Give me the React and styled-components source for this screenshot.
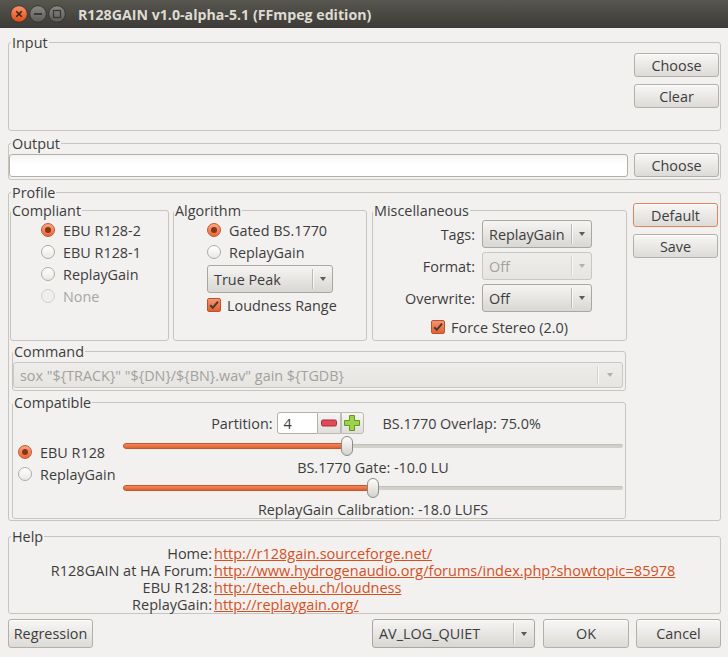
import React from 'react';
import styled, { createGlobalStyle } from 'styled-components';

const GlobalStyle = createGlobalStyle`
  html, body { margin: 0; padding: 0; background: #f2f1f0; }
  body {
    font-family: "Open Sans", "DejaVu Sans", sans-serif;
    font-size: 14.4px;
    color: #3d3d3d;
  }
  * { box-sizing: border-box; }
`;

const Window = styled.div`
  width: 728px;
  height: 657px;
  display: flex;
  flex-direction: column;
  background: #f2f1f0;
  overflow: hidden;
`;

const TitleBar = styled.div`
  height: 28px;
  flex: none;
  display: flex;
  align-items: center;
  padding-left: 10px;
  background: linear-gradient(#57564f, #3c3b37);
  color: #dfdbd2;
  font-weight: bold;
  font-size: 14.2px;
`;

const WinButtons = styled.div`
  display: flex;
  gap: 1px;
  margin-right: 12px;
`;

const Title = styled.span`
  white-space: nowrap;
`;

const Body = styled.div`
  flex: 1;
  display: flex;
  flex-direction: column;
  padding: 6px 7px 0 8px;
`;

const Group = styled.fieldset`
  margin: ${(p) => p.$m || '0'};
  padding: 0;
  min-width: 0;
  border: 1px solid #c8c5c0;
  border-radius: 3px;
  ${(p) => (p.$w ? `width: ${p.$w}px; flex: none;` : '')}
  ${(p) => (p.$h ? `height: ${p.$h}px;` : '')}
`;

const Legend = styled.legend`
  padding: 0 1px;
  margin-left: ${(p) => p.$ml ?? 2}px;
  line-height: 17px;
  font-size: 14.4px;
  color: #3d3d3d;
`;

const Button = styled.div`
  width: ${(p) => p.$w || 85}px;
  height: ${(p) => p.$h || 24}px;
  flex: none;
  display: flex;
  align-items: center;
  justify-content: center;
  border: 1px solid ${(p) => (p.$focus ? '#e3845c' : '#b3b0aa')};
  border-radius: 3px;
  background: linear-gradient(#f8f7f6, #dddbd7);
  box-shadow: inset 0 1px rgba(255, 255, 255, 0.7);
  color: #3d3d3d;
`;

const InputRow = styled.div`
  display: flex;
  height: 79px;
  padding: 2px 1px 0 1px;
  gap: 6px;
`;

const ListArea = styled.div`
  flex: 1;
`;

const ButtonColumn = styled.div`
  display: flex;
  flex-direction: column;
  gap: 7px;
`;

const OutputRow = styled.div`
  display: flex;
  align-items: center;
  gap: 6px;
  padding: 1px 1px 2px 0;
`;

const TextField = styled.div`
  flex: 1;
  height: 23px;
  border: 1px solid #b3b0aa;
  border-radius: 3px;
  background: linear-gradient(#f4f4f3, #ffffff 40%);
`;

const ProfileRow = styled.div`
  display: flex;
  gap: 6px;
  padding: 0 2px 1px 1px;
`;

const LeftColumn = styled.div`
  width: 617px;
  flex: none;
  display: flex;
  flex-direction: column;
  margin-top: 1px;
`;

const RightColumn = styled.div`
  display: flex;
  flex-direction: column;
  gap: 7px;
  padding-top: 2px;
`;

const GroupsRow = styled.div`
  display: flex;
  gap: 4px;
  & > :last-child { margin-left: 1px; }
`;

const Stack = styled.div`
  display: flex;
  flex-direction: column;
  align-items: flex-start;
  padding: ${(p) => p.$pad || '0'};
`;

const RadioRow = styled.div`
  height: 22px;
  display: flex;
  align-items: center;
  gap: 8px;
  white-space: nowrap;
  color: ${(p) => (p.$disabled ? '#a8a6a2' : '#3d3d3d')};
`;

const RadioDot = styled.span`
  position: relative;
  width: 14px;
  height: 14px;
  flex: none;
  border-radius: 50%;
  border: 1px solid
    ${(p) => (p.$checked ? '#c2582c' : p.$disabled ? '#d2d0cc' : '#aeaca6')};
  background: ${(p) =>
    p.$checked
      ? 'linear-gradient(#f7a884, #e8683a)'
      : p.$disabled
      ? '#efeeec'
      : 'linear-gradient(#ffffff, #e9e8e5)'};
  &::after {
    content: '';
    display: ${(p) => (p.$checked ? 'block' : 'none')};
    position: absolute;
    left: 3px;
    top: 3px;
    width: 6px;
    height: 6px;
    border-radius: 50%;
    background: #8a3414;
  }
`;

const CheckRow = styled.div`
  height: 22px;
  display: flex;
  align-items: center;
  gap: 6px;
  white-space: nowrap;
  align-self: ${(p) => p.$align || 'flex-start'};
  margin-top: ${(p) => p.$mt || 0}px;
`;

const CheckBox = styled.span`
  width: 14px;
  height: 14px;
  flex: none;
  display: flex;
  border-radius: 2px;
  border: 1px solid #b9532a;
  background: linear-gradient(#f39570, #e2622f);
`;

const ComboBox = styled.div`
  width: ${(p) => p.$w}px;
  height: ${(p) => p.$h || 28}px;
  flex: none;
  display: flex;
  align-items: stretch;
  border: 1px solid ${(p) => (p.$disabled ? '#c9c7c2' : '#aaa7a1')};
  border-radius: 3px;
  background: ${(p) =>
    p.$disabled ? 'linear-gradient(#eeedeb, #e6e5e2)' : 'linear-gradient(#f6f5f4, #d9d7d3)'};
  color: ${(p) => (p.$disabled ? '#a3a19d' : '#3d3d3d')};
  margin: ${(p) => p.$m || '0'};
`;

const ComboText = styled.div`
  flex: 1;
  display: flex;
  align-items: center;
  padding-left: 6px;
  white-space: nowrap;
  overflow: hidden;
`;

const ComboArrow = styled.div`
  width: ${(p) => p.$aw || 20}px;
  flex: none;
  display: flex;
  align-items: center;
  justify-content: center;
  margin: 3px 0;
  border-left: 1px solid ${(p) => (p.$disabled ? '#d4d2ce' : '#bcb9b4')};
  box-shadow: inset 1px 0 rgba(255, 255, 255, 0.7);
  &::after {
    content: '';
    border-left: 3.5px solid transparent;
    border-right: 3.5px solid transparent;
    border-top: 4px solid ${(p) => (p.$disabled ? '#b3b1ad' : '#5b5a57')};
  }
`;

const MiscBody = styled.div`
  display: flex;
  flex-direction: column;
  padding-top: 1px;
`;

const FormGrid = styled.div`
  display: grid;
  grid-template-columns: 102px 110px;
  column-gap: 7px;
  row-gap: 4px;
  align-items: center;
`;

const FormLabel = styled.div`
  text-align: right;
  white-space: nowrap;
`;

const CompatGrid = styled.div`
  display: grid;
  grid-template-columns: 110px 500px;
  grid-template-rows: 22px 24px 18px 24px 18px;
  padding: 1px 0 0 0;
`;

const SpinRow = styled.div`
  grid-column: 2;
  grid-row: 1;
  display: flex;
  align-items: center;
`;

const SpinHalf = styled.div`
  flex: 1;
  display: flex;
  align-items: center;
  justify-content: ${(p) => (p.$end ? 'flex-end' : 'flex-start')};
  padding: ${(p) => (p.$end ? '0 11px 0 0' : '0 0 0 8px')};
  gap: 4px;
  white-space: nowrap;
`;

const SpinBox = styled.div`
  display: flex;
  height: 22px;
`;

const SpinField = styled.div`
  width: 41px;
  display: flex;
  align-items: center;
  padding-left: 6px;
  border: 1px solid #b3b0aa;
  border-radius: 3px 0 0 3px;
  background: #fff;
`;

const SpinButton = styled.div`
  width: 23px;
  display: flex;
  align-items: center;
  justify-content: center;
  border: 1px solid #bebbb6;
  border-left: ${(p) => (p.$first ? 'none' : '1px solid #bebbb6')};
  border-radius: ${(p) => (p.$last ? '0 3px 3px 0' : '0')};
  background: linear-gradient(#f7f6f5, #e0ded9);
`;

const RadioCol = styled.div`
  grid-column: 1;
  grid-row: 2 / 6;
  padding: 7px 0 0 5px;
`;

const SliderRow = styled.div`
  grid-column: 2;
  grid-row: ${(p) => p.$row};
  display: flex;
  align-items: center;
`;

const CaptionRow = styled.div`
  grid-column: 2;
  grid-row: ${(p) => p.$row};
  display: flex;
  align-items: center;
  justify-content: center;
  white-space: nowrap;
`;

const Track = styled.div`
  position: relative;
  width: 100%;
  height: 4px;
  border-radius: 2px;
  background: #d3d0cb;
  box-shadow: inset 0 1px rgba(0, 0, 0, 0.08);
`;

const TrackFill = styled.div`
  height: 6px;
  margin-top: -1px;
  border-radius: 3px;
  border: 1px solid #c4562a;
  background: linear-gradient(#f08a5f, #e0602e);
`;

const Handle = styled.div`
  position: absolute;
  top: -8px;
  width: 12px;
  height: 20px;
  margin-left: -6px;
  border-radius: 6px;
  border: 1px solid #8e8b85;
  background: linear-gradient(#fdfdfc, #d4d2cd);
`;

const HelpGrid = styled.div`
  display: grid;
  grid-template-columns: 203px auto;
  column-gap: 2px;
  font-size: 14.5px;
  line-height: 17px;
`;

const HelpLabel = styled.div`
  text-align: right;
  white-space: nowrap;
`;

const Link = styled.a`
  color: #d4501f;
  text-decoration: underline;
  white-space: nowrap;
`;

const BottomBar = styled.div`
  display: flex;
  align-items: center;
  gap: 7px;
  padding-top: 5px;
`;

const Spacer = styled.div`
  flex: 1;
`;

const Radio = ({ checked, disabled, children }) => (
  <RadioRow $disabled={disabled}>
    <RadioDot $checked={checked} $disabled={disabled} />
    {children}
  </RadioRow>
);

const Check = ({ children, align, mt }) => (
  <CheckRow $align={align} $mt={mt}>
    <CheckBox>
      <svg width="12" height="12" viewBox="0 0 12 12">
        <path d="M2.2 6.2 L4.8 8.8 L10 2.6" fill="none" stroke="#4a3a33" strokeWidth="2" />
      </svg>
    </CheckBox>
    {children}
  </CheckRow>
);

const Combo = ({ value, disabled, w, h, aw, m }) => (
  <ComboBox $disabled={disabled} $w={w} $h={h} $m={m}>
    <ComboText>{value}</ComboText>
    <ComboArrow $disabled={disabled} $aw={aw} />
  </ComboBox>
);

const Slider = ({ value }) => (
  <Track>
    <TrackFill style={{ width: `${value}%` }} />
    <Handle style={{ left: `${value}%` }} />
  </Track>
);

const WinButton = ({ kind }) => (
  <svg width="18" height="18" viewBox="0 0 18 18">
    <defs>
      <linearGradient id="wbClose" x1="0" y1="0" x2="0" y2="1">
        <stop offset="0" stopColor="#f7946a" />
        <stop offset="1" stopColor="#df4b17" />
      </linearGradient>
      <linearGradient id="wbGrey" x1="0" y1="0" x2="0" y2="1">
        <stop offset="0" stopColor="#8a8983" />
        <stop offset="1" stopColor="#5c5b56" />
      </linearGradient>
    </defs>
    <circle cx="9" cy="9" r="8.3" fill={kind === 'close' ? 'url(#wbClose)' : 'url(#wbGrey)'} stroke="#2f2e2b" strokeWidth="0.8" />
    {kind === 'close' && (
      <path d="M6.3 6.3 L11.7 11.7 M11.7 6.3 L6.3 11.7" stroke="#3a2015" strokeWidth="1.6" />
    )}
    {kind === 'min' && <rect x="5" y="8" width="8" height="2" fill="#3a3935" />}
    {kind === 'max' && (
      <rect x="5.5" y="5.5" width="7" height="7" fill="none" stroke="#3a3935" strokeWidth="1.3" />
    )}
  </svg>
);

export default () => {
  return (
    <Window>
      <GlobalStyle />
      <TitleBar>
        <WinButtons>
          <WinButton kind="close" />
          <WinButton kind="min" />
          <WinButton kind="max" />
        </WinButtons>
        <Title>R128GAIN v1.0-alpha-5.1 (FFmpeg edition)</Title>
      </TitleBar>

      <Body>
        <Group>
          <Legend>Input</Legend>
          <InputRow>
            <ListArea />
            <ButtonColumn>
              <Button>Choose</Button>
              <Button>Clear</Button>
            </ButtonColumn>
          </InputRow>
        </Group>

        <Group $m="4px 0 0">
          <Legend>Output</Legend>
          <OutputRow>
            <TextField />
            <Button>Choose</Button>
          </OutputRow>
        </Group>

        <Group $m="4px 0 0">
          <Legend>Profile</Legend>
          <ProfileRow>
            <LeftColumn>
              <GroupsRow>
                <Group $w={159} $h={139}>
                  <Legend $ml={0}>Compliant</Legend>
                  <Stack $pad="0 0 0 30px">
                    <Radio checked>EBU R128-2</Radio>
                    <Radio>EBU R128-1</Radio>
                    <Radio>ReplayGain</Radio>
                    <Radio disabled>None</Radio>
                  </Stack>
                </Group>
                <Group $w={194} $h={139}>
                  <Legend $ml={0}>Algorithm</Legend>
                  <Stack $pad="0 0 0 33px">
                    <Radio checked>Gated BS.1770</Radio>
                    <Radio>ReplayGain</Radio>
                    <Combo value="True Peak" w={126} m="2px 0 0" />
                    <Check mt={1}>Loudness Range</Check>
                  </Stack>
                </Group>
                <Group $w={255} $h={139}>
                  <Legend $ml={0}>Miscellaneous</Legend>
                  <MiscBody>
                    <FormGrid>
                      <FormLabel>Tags:</FormLabel>
                      <Combo value="ReplayGain" w={110} />
                      <FormLabel>Format:</FormLabel>
                      <Combo value="Off" w={110} disabled />
                      <FormLabel>Overwrite:</FormLabel>
                      <Combo value="Off" w={110} />
                    </FormGrid>
                    <Check align="center" mt={4}>Force Stereo (2.0)</Check>
                  </MiscBody>
                </Group>
              </GroupsRow>

              <Group $m="2px 1px 0 2px">
                <Legend $ml={0}>Command</Legend>
                <Stack $pad="2px 2px 2px 0">
                  <Combo
                    value={'sox "${TRACK}" "${DN}/${BN}.wav" gain ${TGDB}'}
                    w={610}
                    h={26}
                    aw={25}
                    disabled
                  />
                </Stack>
              </Group>

              <Group $m="3px 1px 0 2px">
                <Legend $ml={0}>Compatible</Legend>
                <CompatGrid>
                  <SpinRow>
                    <SpinHalf $end>
                      Partition:
                      <SpinBox>
                        <SpinField>4</SpinField>
                        <SpinButton $first>
                          <svg width="16" height="8" viewBox="0 0 16 8">
                            <rect x="0.5" y="1" width="15" height="6" rx="1.5" fill="#e04a58" stroke="#a82a36" />
                          </svg>
                        </SpinButton>
                        <SpinButton $last>
                          <svg width="16" height="16" viewBox="0 0 16 16">
                            <path
                              d="M5.5 0.5 h5 v5 h5 v5 h-5 v5 h-5 v-5 h-5 v-5 h5 z"
                              fill="#9fd24a"
                              stroke="#5f9a1c"
                            />
                          </svg>
                        </SpinButton>
                      </SpinBox>
                    </SpinHalf>
                    <SpinHalf>BS.1770 Overlap: 75.0%</SpinHalf>
                  </SpinRow>
                  <RadioCol>
                    <Radio checked>EBU R128</Radio>
                    <Radio>ReplayGain</Radio>
                  </RadioCol>
                  <SliderRow $row={2}>
                    <Slider value={44.8} />
                  </SliderRow>
                  <CaptionRow $row={3}>BS.1770 Gate: -10.0 LU</CaptionRow>
                  <SliderRow $row={4}>
                    <Slider value={50} />
                  </SliderRow>
                  <CaptionRow $row={5}>ReplayGain Calibration: -18.0 LUFS</CaptionRow>
                </CompatGrid>
              </Group>
            </LeftColumn>

            <RightColumn>
              <Button $focus>Default</Button>
              <Button>Save</Button>
            </RightColumn>
          </ProfileRow>
        </Group>

        <Group $m="7px 0 0">
          <Legend>Help</Legend>
          <HelpGrid>
            <HelpLabel>Home:</HelpLabel>
            <Link>http://r128gain.sourceforge.net/</Link>
            <HelpLabel>R128GAIN at HA Forum:</HelpLabel>
            <Link>http://www.hydrogenaudio.org/forums/index.php?showtopic=85978</Link>
            <HelpLabel>EBU R128:</HelpLabel>
            <Link>http://tech.ebu.ch/loudness</Link>
            <HelpLabel>ReplayGain:</HelpLabel>
            <Link>http://replaygain.org/</Link>
          </HelpGrid>
        </Group>

        <BottomBar>
          <Button $h={29}>Regression</Button>
          <Spacer />
          <Combo value="AV_LOG_QUIET" w={163} h={29} aw={21} m="0 1px 0 0" />
          <Button $w={86} $h={29}>OK</Button>
          <Button $h={29}>Cancel</Button>
        </BottomBar>
      </Body>
    </Window>
  );
};
